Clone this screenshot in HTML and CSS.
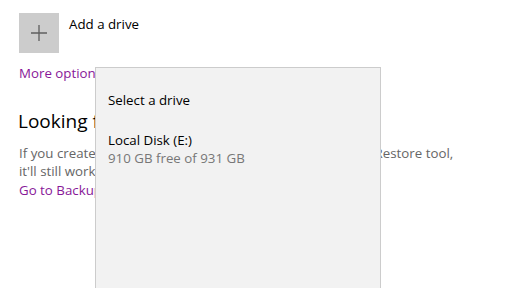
FILE: index.html
```html
<!DOCTYPE html>
<html>
<head>
<meta charset="utf-8">
<link rel="stylesheet" href="styles.css">
</head>
<body>
<div class="page">
  <div class="add-row">
    <div class="tile">
      <svg width="40" height="40" viewBox="0 0 40 40"><path d="M20 12v16M12 20h16" stroke="#5f5f5f" stroke-width="1.3" fill="none"/></svg>
    </div>
    <div class="add-label">Add a drive</div>
  </div>
  <a class="link more">More options</a>
  <h2 class="heading">Looking for an older backup?</h2>
  <p class="desc">If you created a backup using the Windows 7 Backup and Restore tool,<br>it'll still work in Windows 10.</p>
  <a class="link goto">Go to Backup and Restore (Windows 7)</a>
</div>
<div class="flyout">
  <div class="fly-title">Select a drive</div>
  <div class="drive">
    <div class="drive-name">Local Disk (E:)</div>
    <div class="drive-free">910 GB free of 931 GB</div>
  </div>
</div>
</body>
</html>
```
FILE: styles.css
```css
html, body {
  margin: 0;
  padding: 0;
  background: #ffffff;
  width: 516px;
  height: 288px;
  overflow: hidden;
}
body {
  font-family: "Open Sans", "Noto Sans", sans-serif;
  font-size: 13.3px;
  color: #000;
  position: relative;
}
.page {
  padding: 13px 0 0 19px;
}
.add-row {
  display: flex;
  align-items: flex-start;
  gap: 10px;
}
.tile {
  width: 40px;
  height: 40px;
  background: #cccccc;
  display: flex;
}
.add-label {
  line-height: 20px;
  margin-top: 1px;
}
.link {
  display: block;
  color: #881798;
  line-height: 20px;
}
.more {
  margin-top: 10px;
}
.heading {
  font-weight: normal;
  font-size: 19px;
  line-height: 26px;
  margin: 25px 0 0 -1px;
}
.desc {
  color: #666666;
  margin: 10px 0 0 0;
  line-height: 18px;
}
.goto {
  margin-top: 0;
}
.flyout {
  position: absolute;
  left: 95px;
  top: 67px;
  bottom: -1px;
  width: 286px;
  background: #f2f2f2;
  border: 1px solid #cccccc;
  padding: 0 12px;
  box-sizing: border-box;
}
.fly-title {
  margin-top: 22px;
  line-height: 20px;
}
.drive {
  margin-top: 21px;
}
.drive-name {
  line-height: 18px;
}
.drive-free {
  color: #777777;
  line-height: 18px;
}
```
